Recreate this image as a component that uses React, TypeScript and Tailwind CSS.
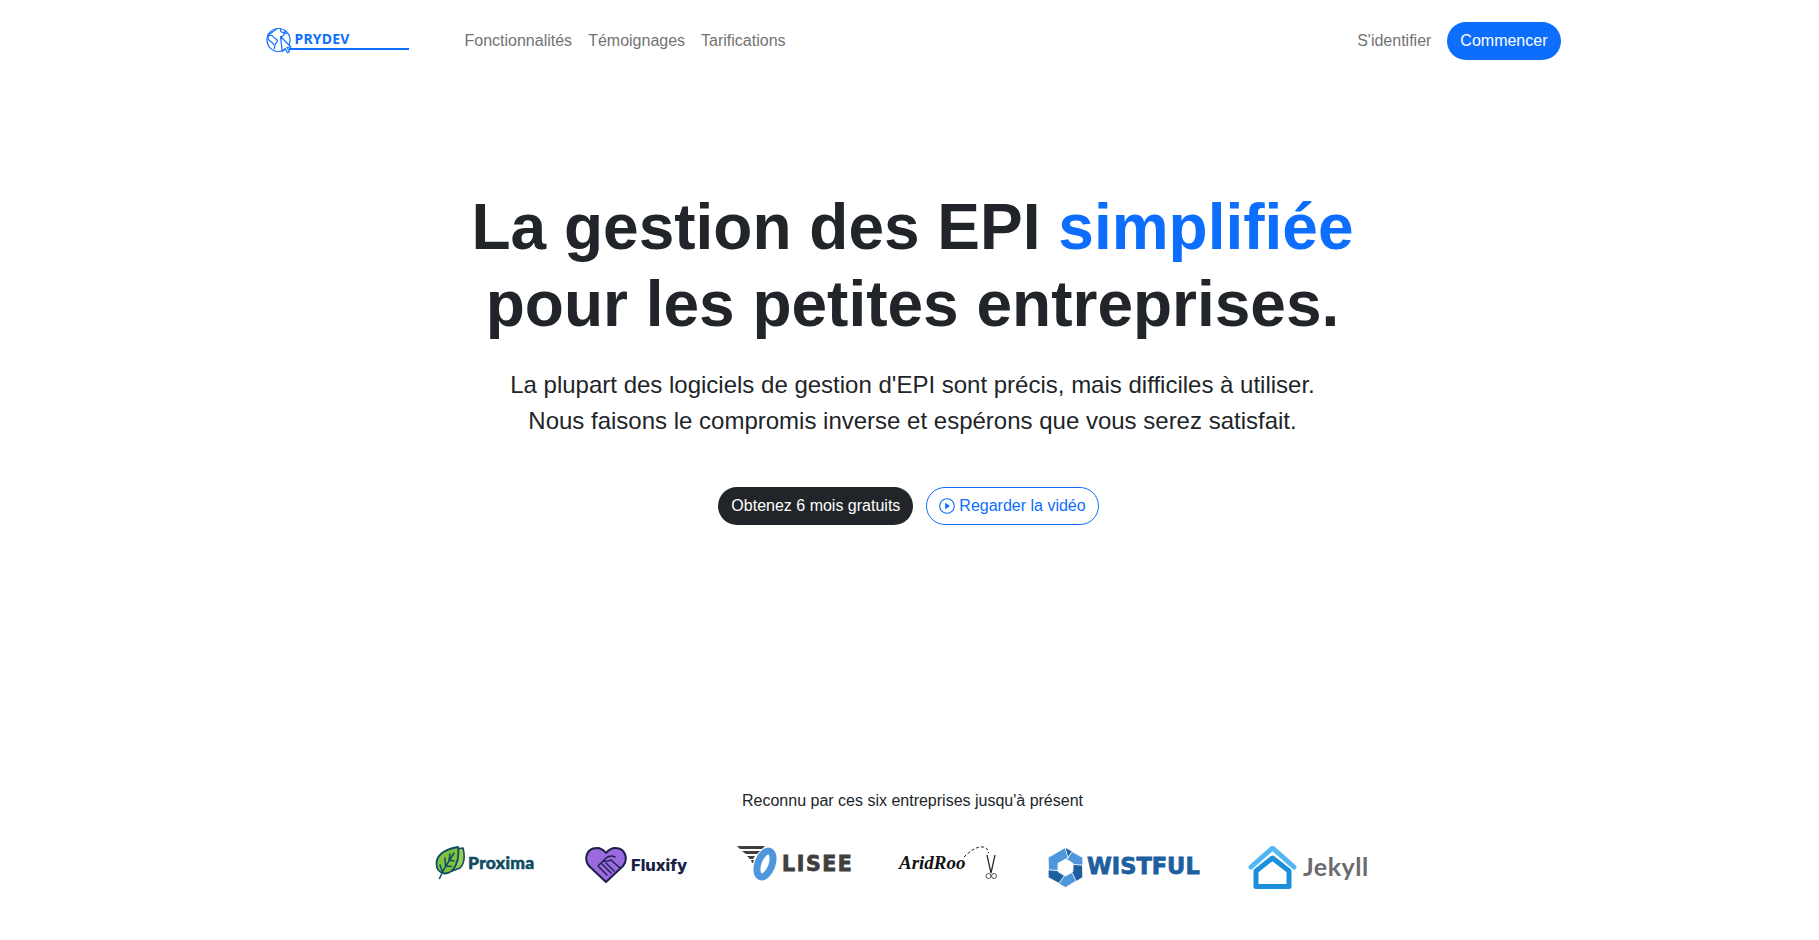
function BrandLogo() {
  return (
    <a className="relative flex h-[30px] w-[146px] items-center pl-[1px]">
      <svg width="28" height="28" viewBox="0 0 28 28" fill="none" stroke="#0d6efd" strokeWidth="1.2" strokeLinejoin="round" className="shrink-0">
        <circle cx="12.5" cy="13" r="11.5" />
        <path d="M11 1.500c-1 1.500-3 2-4.500 3.500C5 6.500 3 7 1.500 8.500M2.500 9c2-1.500 4-.5 5 1 1 1.800 2.500 1.500 3.500 2.800s-.5 3-1.500 4-.5 3-1.500 5.500" />
        <path d="M2.500 9c-1 2 0 4 1.500 5s3.500 2 4 4" />
        <path d="M15 1.800c-1 1.500-.5 3.500 1.500 3.500s2 1.200 1.500 2.500-2.500.8-3 3M19 3.500c-.5 1.500.5 3 2 3.500" />
        <path d="M14.500 9.500 25 20l-4 .5 2.500 4-2 1.200-2.300-4.200-3 2.800z" fill="#fff" />
      </svg>
      <span className="absolute top-[4px] left-[30px] font-['Noto_Sans'] text-[14px] leading-[18px] font-bold tracking-[0.2px] text-[#0d6efd]">
        PRYDEV
      </span>
      <span className="absolute top-[22px] left-[24px] h-[2px] w-[120px] bg-[#0d6efd]" />
    </a>
  );
}

function Proxima() {
  return (
    <div className="flex w-[100px] items-center">
      <svg width="31" height="34" viewBox="0 0 31 34" className="shrink-0">
        <path d="M12 4 28 2c2 8 2 15-3 20l-8 3z" fill="#9ccc58" stroke="#0f4c63" strokeWidth="1.6" strokeLinejoin="round" />
        <path d="M23 1C12 3 2 8 1.500 17c-.3 6 3 10 8 10.500C19 28 25 15 23 1z" fill="#7fc241" stroke="#0f4c63" strokeWidth="1.8" strokeLinejoin="round" />
        <path d="M19 7 9 23 4.500 32.500M14 14l1-6M14 14l5 1M10.500 20l-.5-8M10.500 20l6 .5M7 25l-2-6" fill="none" stroke="#0f4c63" strokeWidth="1.500" strokeLinecap="round" />
      </svg>
      <span className="ml-[2px] font-['Lato'] text-[17.5px] leading-none font-black tracking-[0.3px] text-[#0f4c63] [-webkit-text-stroke:0.5px_#0f4c63]">Proxima</span>
    </div>
  );
}

function Fluxify() {
  return (
    <div className="flex w-[102px] items-center">
      <svg width="42" height="38" viewBox="0 0 42 38" className="shrink-0">
        <path d="M21 36 4 20C-1 14 1 5 8 2.500 13 1 18 3 21 7c3-4 8-6 13-4.500C41 5 43 14 38 20z" fill="#9b6ade" stroke="#1a2148" strokeWidth="2" strokeLinejoin="round" />
        <path d="M30 11c-4-2-7-1-10 2l-7 7M18 15c3 1 5 0 8-1l9 8M13 20l9 9M17 18l9 9M21 17l8 8" fill="none" stroke="#1a2148" strokeWidth="1.400" strokeLinecap="round" />
      </svg>
      <span className="ml-[4px] font-['Inter'] text-[16.5px] leading-none font-extrabold text-[#1a2148]">Fluxify</span>
    </div>
  );
}

function Lisee() {
  return (
    <div className="relative h-[40px] w-[112px]">
      <svg width="46" height="36" viewBox="0 0 46 36" className="absolute top-0 left-0">
        <path d="M0 0h28l-3 3H3zM5 5h18l-3 3H9zM10 10h8l-2 3h-3zM14 14h3l-1 3h-1z" fill="#3f3f3f" />
        <ellipse cx="28" cy="18" rx="7" ry="13.500" transform="rotate(20 28 18)" fill="none" stroke="#4f97dc" strokeWidth="7" />
      </svg>
      <span className="absolute top-[6px] left-[45px] font-['DejaVu_Sans'] text-[20.5px] leading-[24px] font-bold tracking-[1.6px] text-[#3f3f3f] [-webkit-text-stroke:0.8px_#3f3f3f]">LISEE</span>
    </div>
  );
}

function AridRoo() {
  return (
    <div className="relative h-[40px] w-[98px]">
      <span className="absolute top-[5px] left-0 font-['Liberation_Serif'] text-[19px] leading-[24px] font-bold italic text-[#111]">AridRoo</span>
      <svg width="36" height="36" viewBox="0 0 36 36" className="absolute top-0 left-[64px]">
        <path d="M1 11C7 5 14 0 20 1c3 .5 5 2 5.500 6" fill="none" stroke="#222" strokeWidth="1" strokeDasharray="3 2" />
        <path d="M24 9l4 18M32 9l-4 18" stroke="#222" strokeWidth="1.200" />
        <circle cx="25.500" cy="30" r="2.500" fill="none" stroke="#444" strokeWidth="0.900" />
        <circle cx="31" cy="30" r="2.500" fill="none" stroke="#444" strokeWidth="0.900" />
      </svg>
    </div>
  );
}

const hexBlades = [0, 60, 120, 180, 240, 300];

function Wistful() {
  return (
    <div className="mt-[1px] flex w-[151px] items-center">
      <svg width="37" height="41" viewBox="0 0 37 41" className="shrink-0">
        {hexBlades.map((deg, i) => (
          <path
            key={deg}
            d="M18.500.5 35.500 10.200 28 18 25 16 18.500 12 12 15.500 8 7z"
            transform={`rotate(${deg} 18.5 20.5)`}
            fill={i % 2 === 0 ? "#1d5f9f" : "#4f97dc"}
            stroke="#fff"
            strokeWidth="0.8"
          />
        ))}
      </svg>
      <span className="mb-[2px] ml-[3px] font-['DejaVu_Sans'] text-[22.5px] leading-none font-bold text-[#1d5f9f] [-webkit-text-stroke:0.8px_#1d5f9f]">WISTFUL</span>
    </div>
  );
}

function Jekyll() {
  return (
    <div className="flex w-[142px] items-center">
      <svg width="49" height="43" viewBox="0 0 49 43" className="shrink-0">
        <path d="M3 21 24.500 2 46 21" fill="none" stroke="#53b7f5" strokeWidth="5" strokeLinecap="round" strokeLinejoin="round" />
        <path d="M8 40.500V25L24.500 12 41 25v15.500z" fill="none" stroke="#1c8fdc" strokeWidth="5" strokeLinejoin="round" />
      </svg>
      <span className="mb-[3px] ml-[6px] font-['Lato'] text-[25px] leading-none font-bold tracking-[0.5px] text-[#6b6b70]">Jekyll</span>
    </div>
  );
}

export default function App() {
  return (
    <div className="h-[940px] overflow-hidden bg-white font-['Liberation_Sans',sans-serif] text-[#212529]">
      <header className="mx-auto flex h-[82px] w-[1320px] items-center justify-between pr-[9px] pl-[15px]">
        <div className="flex items-center">
          <BrandLogo />
          <nav className="ml-[54px] flex gap-[16px] text-[16px] text-[#737373]">
            <a>Fonctionnalités</a>
            <a>Témoignages</a>
            <a>Tarifications</a>
          </nav>
        </div>
        <div className="flex items-center gap-[16px]">
          <a className="text-[16px] text-[#737373]">S'identifier</a>
          <button className="h-[38px] rounded-full bg-[#0d6efd] px-[13px] text-[16px] text-white">Commencer</button>
        </div>
      </header>

      <main className="pl-[6px] text-center">
        <h1 className="mt-[107px] text-[64px] leading-[77px] font-bold">
          La gestion des EPI <span className="text-[#0d6efd]">simplifiée</span>
          <br />
          pour les petites entreprises.
        </h1>
        <p className="mt-[24px] text-[24px] leading-[36px]">
          La plupart des logiciels de gestion d'EPI sont précis, mais difficiles à utiliser.
          <br />
          Nous faisons le compromis inverse et espérons que vous serez satisfait.
        </p>
        <div className="mt-[48px] flex justify-center gap-[13px] pr-[8px]">
          <button className="h-[38px] rounded-full bg-[#212529] px-[13px] text-[16px] text-white">Obtenez 6 mois gratuits</button>
          <button className="flex h-[38px] items-center gap-[4px] rounded-full border border-[#0d6efd] px-[12px] text-[16px] text-[#0d6efd]">
            <svg width="16" height="16" viewBox="0 0 16 16">
              <circle cx="8" cy="8" r="7.300" fill="none" stroke="#0d6efd" strokeWidth="1.100" />
              <path d="M6.200 4.800v6.400L11 8z" fill="#0d6efd" />
            </svg>
            Regarder la vidéo
          </button>
        </div>

        <p className="mt-[264px] text-[16px] leading-[24px]">Reconnu par ces six entreprises jusqu'à présent</p>
        <div className="mt-[33px] flex items-start justify-center gap-[50px]">
          <Proxima />
          <Fluxify />
          <Lisee />
          <AridRoo />
          <Wistful />
          <Jekyll />
        </div>
      </main>
    </div>
  );
}
